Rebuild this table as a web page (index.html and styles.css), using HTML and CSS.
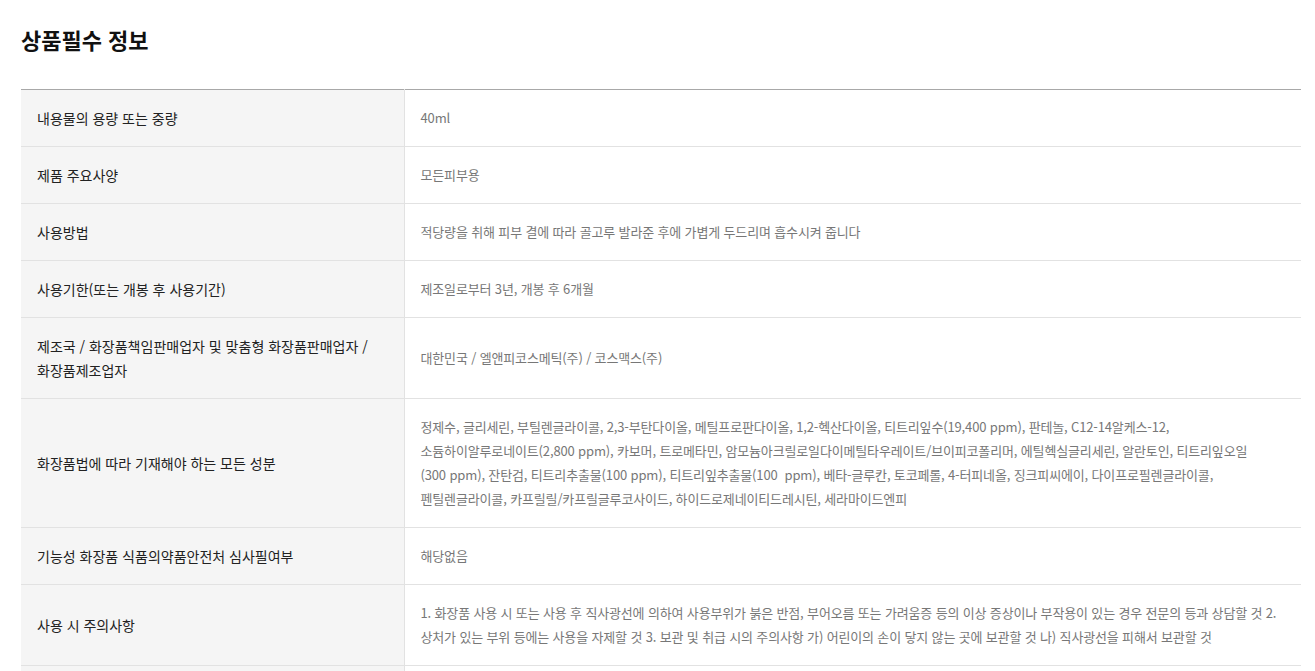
FILE: index.html
```html
<!DOCTYPE html>
<html lang="ko">
<head>
<meta charset="utf-8">
<title>상품필수 정보</title>
<link rel="stylesheet" href="styles.css">
</head>
<body>
<section class="info">
  <h2 class="info-title">상품필수 정보</h2>
  <table class="info-table">
    <tbody>
      <tr><th>내용물의 용량 또는 중량</th><td>40ml</td></tr>
      <tr><th>제품 주요사양</th><td>모든피부용</td></tr>
      <tr><th>사용방법</th><td>적당량을 취해 피부 결에 따라 골고루 발라준 후에 가볍게 두드리며 흡수시켜 줍니다</td></tr>
      <tr><th>사용기한(또는 개봉 후 사용기간)</th><td>제조일로부터 3년, 개봉 후 6개월</td></tr>
      <tr><th>제조국 / 화장품책임판매업자 및 맞춤형 화장품판매업자 /<br>화장품제조업자</th><td>대한민국 / 엘앤피코스메틱(주) / 코스맥스(주)</td></tr>
      <tr><th>화장품법에 따라 기재해야 하는 모든 성분</th><td>정제수, 글리세린, 부틸렌글라이콜, 2,3-부탄다이올, 메틸프로판다이올, 1,2-헥산다이올, 티트리잎수(19,400 ppm), 판테놀, C12-14알케스-12,<br>소듐하이알루로네이트(2,800 ppm), 카보머, 트로메타민, 암모늄아크릴로일다이메틸타우레이트/브이피코폴리머, 에틸헥실글리세린, 알란토인, 티트리잎오일<br>(300 ppm), 잔탄검, 티트리추출물(100 ppm), 티트리잎추출물(100&nbsp; ppm), 베타-글루칸, 토코페롤, 4-터피네올, 징크피씨에이, 다이프로필렌글라이콜,<br>펜틸렌글라이콜, 카프릴릴/카프릴글루코사이드, 하이드로제네이티드레시틴, 세라마이드엔피</td></tr>
      <tr><th>기능성 화장품 식품의약품안전처 심사필여부</th><td>해당없음</td></tr>
      <tr><th>사용 시 주의사항</th><td>1. 화장품 사용 시 또는 사용 후 직사광선에 의하여 사용부위가 붉은 반점, 부어오름 또는 가려움증 등의 이상 증상이나 부작용이 있는 경우 전문의 등과 상담할 것 2.<br>상처가 있는 부위 등에는 사용을 자제할 것 3. 보관 및 취급 시의 주의사항 가) 어린이의 손이 닿지 않는 곳에 보관할 것 나) 직사광선을 피해서 보관할 것</td></tr>
      <tr><th>품질보증기준</th><td>본 제품에 이상이 있을 경우 공정거래위원회 고시 소비자분쟁해결기준에 의해 보상해 드립니다.</td></tr>
    </tbody>
  </table>
</section>
</body>
</html>
```

FILE: styles.css
```css
* { box-sizing: border-box; }
html, body { margin: 0; padding: 0; background: #fff; }
body {
  font-family: "Noto Sans CJK KR", "Noto Sans", sans-serif;
  color: #222;
}
.info {
  padding: 24px 0 0 21px;
  width: 1301px;
}
.info-title {
  margin: 0 0 35px;
  font-size: 22px;
  line-height: 30px;
  font-weight: 700;
  color: #111;
}
.info-table {
  width: 1280px;
  border-collapse: collapse;
  border-top: 1px solid #a8a8a8;
}
.info-table th,
.info-table td {
  border-bottom: 1px solid #e2e2e2;
  padding: 16px 16px;
  vertical-align: middle;
  text-align: left;
  line-height: 24px;
}
.info-table th {
  width: 383px;
  background: #f5f5f5;
  border-right: 1px solid #e2e2e2;
  font-size: 14px;
  font-weight: 400;
  color: #222;
}
.info-table td {
  padding-right: 4px;
  font-size: 13px;
  color: #777;
  white-space: nowrap;
  letter-spacing: -0.15px;
}
```
